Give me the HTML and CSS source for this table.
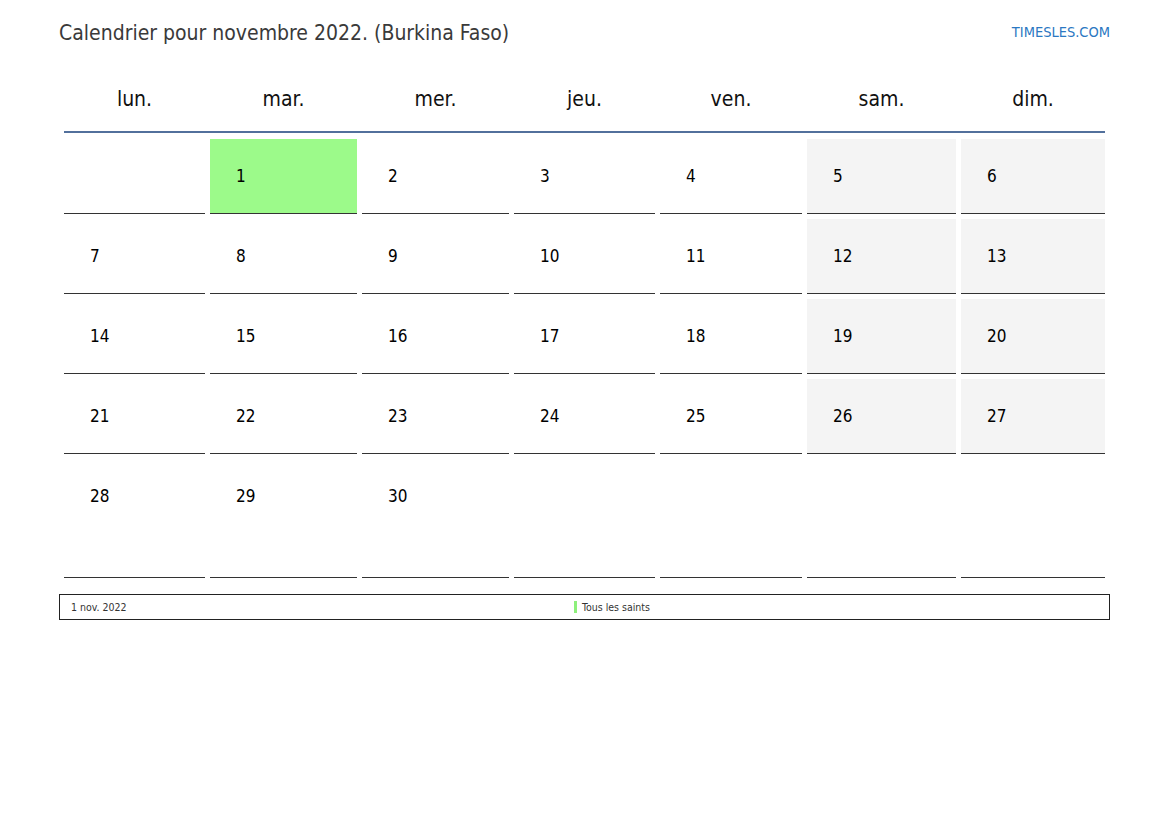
FILE: index.html
```html
<!DOCTYPE html>
<html lang="fr">
<head>
<meta charset="utf-8">
<title>Calendrier novembre 2022</title>
<link rel="stylesheet" href="styles.css">
</head>
<body>
<div class="page">
  <header class="top">
    <h1 class="title">Calendrier pour novembre 2022. (Burkina Faso)</h1>
    <a class="brand" href="#">TIMESLES.COM</a>
  </header>
  <div class="cal">
    <div class="head">
      <div class="dn">lun.</div><div class="dn">mar.</div><div class="dn">mer.</div><div class="dn">jeu.</div><div class="dn">ven.</div><div class="dn">sam.</div><div class="dn">dim.</div>
    </div>
    <div class="grid">
      <div class="c"></div><div class="c hol"><span>1</span></div><div class="c"><span>2</span></div><div class="c"><span>3</span></div><div class="c"><span>4</span></div><div class="c we"><span>5</span></div><div class="c we"><span>6</span></div>
      <div class="c"><span>7</span></div><div class="c"><span>8</span></div><div class="c"><span>9</span></div><div class="c"><span>10</span></div><div class="c"><span>11</span></div><div class="c we"><span>12</span></div><div class="c we"><span>13</span></div>
      <div class="c"><span>14</span></div><div class="c"><span>15</span></div><div class="c"><span>16</span></div><div class="c"><span>17</span></div><div class="c"><span>18</span></div><div class="c we"><span>19</span></div><div class="c we"><span>20</span></div>
      <div class="c"><span>21</span></div><div class="c"><span>22</span></div><div class="c"><span>23</span></div><div class="c"><span>24</span></div><div class="c"><span>25</span></div><div class="c we"><span>26</span></div><div class="c we"><span>27</span></div>
      <div class="c"><span>28</span></div><div class="c"><span>29</span></div><div class="c"><span>30</span></div><div class="c"></div><div class="c"></div><div class="c"></div><div class="c"></div>
    </div>
  </div>
  <div class="legend">
    <div class="ldate">1 nov. 2022</div>
    <div class="lname"><i class="mark"></i>Tous les saints</div>
  </div>
</div>
</body>
</html>
```
FILE: styles.css
```css
html, body {
  margin: 0;
  padding: 0;
  background: #fff;
}
body {
  font-family: "DejaVu Sans Condensed", "DejaVu Sans", sans-serif;
  color: #000;
}
.page {
  width: 1051px;
  margin-left: 59px;
  padding-top: 20px;
}
.top {
  display: flex;
  justify-content: space-between;
  align-items: flex-start;
  height: 46px;
}
.title {
  margin: 0;
  font-weight: normal;
  font-size: 21px;
  line-height: 26px;
  color: #3a3a3a;
}
.brand {
  font-size: 14.5px;
  line-height: 24px;
  color: #2b78c2;
  text-decoration: none;
}
.cal {
  margin-left: 5px;
  width: 1041px;
}
.head {
  display: grid;
  grid-template-columns: 141px 147px 147px 141px 142px 149px 144px;
  column-gap: 5px;
  height: 65px;
  border-bottom: 2px solid #52709c;
}
.dn {
  text-align: center;
  font-size: 21px;
  line-height: 67px;
  color: #111;
}
.grid {
  display: grid;
  grid-template-columns: 141px 147px 147px 141px 142px 149px 144px;
  grid-template-rows: 75px 75px 75px 75px 119px;
  column-gap: 5px;
  row-gap: 5px;
  margin-top: 6px;
}
.grid .c {
  box-sizing: border-box;
  border-bottom: 1px solid #333;
  padding: 26px 0 0 26px;
  font-size: 17px;
  line-height: 22px;
}
.grid .c.we {
  background: #f4f4f4;
}
.grid .c.hol {
  background: #9cfa8a;
}
.legend {
  display: flex;
  margin-top: 16px;
  height: 26px;
  box-sizing: border-box;
  border: 1px solid #222;
  font-size: 10.5px;
  color: #333;
  align-items: center;
}
.ldate {
  width: 503px;
  padding-left: 11px;
}
.lname {
  display: flex;
  align-items: center;
}
.mark {
  display: inline-block;
  width: 3px;
  height: 12px;
  background: #8ef07c;
  margin-right: 5px;
}
```
